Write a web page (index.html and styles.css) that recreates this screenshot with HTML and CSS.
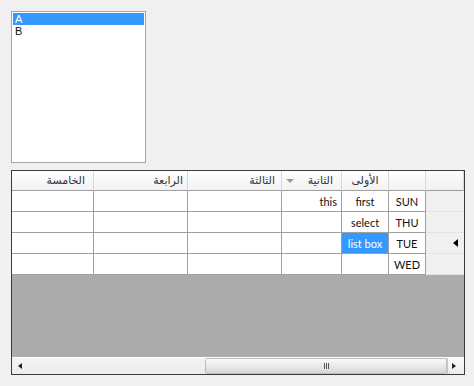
FILE: index.html
```html
<!DOCTYPE html>
<html>
<head>
<meta charset="utf-8">
<link rel="stylesheet" href="styles.css">
</head>
<body>
<div class="page">
  <div class="listbox">
    <div class="item sel">A</div>
    <div class="item">B</div>
  </div>

  <div class="grid">
    <div class="row head">
      <div class="c w1 th"><span dir="rtl">الخامسة</span></div>
      <div class="c w2 th"><span dir="rtl">الرابعة</span></div>
      <div class="c w3 th"><span dir="rtl">الثالثة</span></div>
      <div class="c w4 th sorted"><span class="sort"></span><span dir="rtl">الثانية</span></div>
      <div class="c w5 th mid"><span dir="rtl">الأولى</span></div>
      <div class="c w6 th corner"></div>
      <div class="c w7 th corner2"></div>
    </div>
    <div class="row">
      <div class="c w1"></div><div class="c w2"></div><div class="c w3"></div>
      <div class="c w4 right">this</div>
      <div class="c w5 mid">first</div>
      <div class="c w6 mid vh">SUN</div>
      <div class="c w7 ind"></div>
    </div>
    <div class="row">
      <div class="c w1"></div><div class="c w2"></div><div class="c w3"></div>
      <div class="c w4"></div>
      <div class="c w5 mid">select</div>
      <div class="c w6 mid vh">THU</div>
      <div class="c w7 ind"></div>
    </div>
    <div class="row">
      <div class="c w1"></div><div class="c w2"></div><div class="c w3"></div>
      <div class="c w4"></div>
      <div class="c w5 mid selcell">list box</div>
      <div class="c w6 mid vh">TUE</div>
      <div class="c w7 ind"><span class="cur"></span></div>
    </div>
    <div class="row">
      <div class="c w1"></div><div class="c w2"></div><div class="c w3"></div>
      <div class="c w4"></div>
      <div class="c w5 mid"></div>
      <div class="c w6 mid vh">WED</div>
      <div class="c w7 ind"></div>
    </div>
    <div class="empty"></div>
    <div class="hscroll">
      <div class="btn left"><span class="arr-l"></span></div>
      <div class="track"></div>
      <div class="thumb"><span class="grip"></span></div>
      <div class="btn right"><span class="arr-r"></span></div>
    </div>
  </div>
</div>
</body>
</html>
```

FILE: styles.css
```css
html, body {
  margin: 0;
  padding: 0;
  background: #f0f0f0;
}
.page {
  padding: 11px 0 0 11px;
  font-family: Lato, "DejaVu Sans", sans-serif;
  font-size: 11px;
  color: #111;
}
.listbox {
  width: 133px;
  height: 149px;
  border: 1px solid #a5a5a5;
  background: #fff;
  padding-top: 1px;
  box-sizing: content-box;
}
.listbox .item {
  height: 12px;
  line-height: 12px;
  margin: 0 1px;
  padding-left: 2px;
  font-family: "Liberation Sans", sans-serif;
  font-size: 11px;
}
.listbox .item.sel {
  background: #3399ff;
  color: #fff;
}
.grid {
  margin-top: 7px;
  width: 452px;
  height: 203px;
  border: 1px solid #3c3c3c;
  background: #ababab;
  display: flex;
  flex-direction: column;
}
.row {
  display: flex;
  height: 21px;
  flex: none;
}
.row.head {
  height: 20px;
}
.c {
  box-sizing: border-box;
  border-right: 1px solid #a0a0a0;
  border-bottom: 1px solid #a0a0a0;
  background: #fff;
  display: flex;
  align-items: center;
  justify-content: flex-end;
  padding-right: 5px;
  white-space: nowrap;
}
.w1 { width: 82px; }
.w2 { width: 94px; }
.w3 { width: 94px; }
.w4 { width: 60px; }
.w5 { width: 47px; }
.w6 { width: 37px; }
.w7 { width: 38px; border-right: none; }
.th {
  background: linear-gradient(#ffffff, #f2f2f2);
  border-right: 1px solid #d8d8d8;
  border-bottom: 1px solid #a0a0a0;
  color: #333;
  padding-right: 8px;
  font-family: "DejaVu Sans", sans-serif;
  font-size: 11px;
}
.th.w2 { padding-right: 4px; }
.th.w3 { padding-right: 6px; }
.th.corner { border-right: 1px solid #d8d8d8; }
.th.corner2 { background: linear-gradient(#fbfbfb, #f0f0f0); }
.sorted {
  justify-content: space-between;
  padding-left: 4px;
}
.sort {
  width: 0;
  height: 0;
  border-left: 4px solid transparent;
  border-right: 4px solid transparent;
  border-top: 4px solid #9a9a9a;
}
.mid {
  justify-content: center;
  padding-right: 0;
}
.right { padding-right: 4px; }
.vh { background: #fff; }
.selcell {
  background: #3399ff;
  color: #fff;
}
.ind {
  background: #f0f0f0;
  border-bottom: 1px solid #e2e2e2;
  padding-right: 6px;
}
.cur {
  width: 0;
  height: 0;
  border-top: 4px solid transparent;
  border-bottom: 4px solid transparent;
  border-right: 5px solid #000;
}
.empty {
  flex: 1;
  background: #ababab;
}
.hscroll {
  height: 16px;
  flex: none;
  display: flex;
  background: linear-gradient(#f4f4f4, #ececec);
  border-top: 1px solid #fdfdfd;
}
.btn {
  width: 16px;
  display: flex;
  align-items: center;
  justify-content: center;
  box-sizing: border-box;
}
.btn.right {
  background: linear-gradient(#fafafa, #eaeaea);
  border-left: 1px solid #c9c9c9;
}
.arr-l {
  width: 0;
  height: 0;
  border-top: 3px solid transparent;
  border-bottom: 3px solid transparent;
  border-right: 4px solid #222;
}
.arr-r {
  width: 0;
  height: 0;
  border-top: 3px solid transparent;
  border-bottom: 3px solid transparent;
  border-left: 4px solid #222;
}
.track {
  width: 177px;
}
.thumb {
  width: 242px;
  box-sizing: border-box;
  border: 1px solid #bdbdbd;
  border-radius: 2px;
  background: linear-gradient(#f9f9f9, #e6e6e6 60%, #d6d6d6);
  display: flex;
  align-items: center;
  justify-content: center;
}
.grip {
  width: 5px;
  height: 6px;
  background: repeating-linear-gradient(90deg, #555 0 1px, transparent 1px 2px);
}
```
